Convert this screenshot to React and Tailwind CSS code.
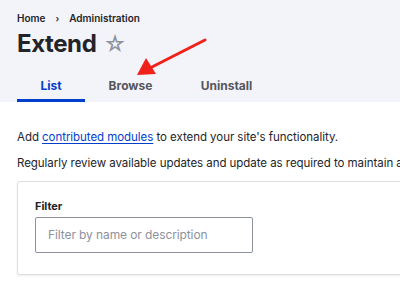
import React from "react";

const Arrow = () => (
  <svg className="absolute left-0 top-0 pointer-events-none" width="400" height="284">
    <line x1="205" y1="40" x2="150" y2="68" stroke="#f0201a" strokeWidth="3" strokeLinecap="round" />
    <polygon points="137,75 146,58 156,74" fill="#f0201a" />
  </svg>
);

const App = () => {
  const tabs = [
    { label: "List", active: true, w: "w-[68px]" },
    { label: "Browse", active: false, w: "w-[91px]" },
    { label: "Uninstall", active: false, w: "w-[101px]" },
  ];

  return (
    <div className="relative w-[400px] h-[284px] overflow-hidden bg-white text-[#232429]" style={{ fontFamily: "Inter, 'Noto Sans', sans-serif" }}>
      <div className="w-[640px]">
        {/* Header */}
        <div className="bg-[#f3f4f9] h-[102px] px-[17px] pt-[12px] flex flex-col">
          <div className="flex items-center text-[10px] font-semibold text-[#232429] leading-[13px]">
            <span>Home</span>
            <span className="mx-[10px] text-[9px]">›</span>
            <span>Administration</span>
          </div>
          <div className="flex items-center mt-[4px] h-[30px]">
            <h1 className="text-[24px] font-bold leading-[30px] tracking-[-0.4px]">Extend</h1>
            <span className="ml-[7px] text-[22px] text-[#8e929c] leading-none">☆</span>
          </div>
          <div className="flex mt-auto">
            {tabs.map((t) => (
              <div
                key={t.label}
                className={`${t.w} h-[31px] flex justify-center pt-[6px] text-[12px] font-bold ${
                  t.active ? "text-[#003ecc] border-b-[3px] border-[#003ecc]" : "text-[#55565b]"
                }`}
              >
                {t.label}
              </div>
            ))}
          </div>
        </div>

        {/* Content */}
        <div className="px-[17px] pt-[26px] text-[11.5px] tracking-[-0.05px] leading-[18px] whitespace-nowrap">
          <p>
            Add{" "}
            <a className="text-[#003ecc] underline underline-offset-2">contributed modules</a>{" "}
            to extend your site's functionality.
          </p>
          <p className="mt-[8px]">
            Regularly review available updates and update as required to maintain a secure and current site.
          </p>
          <div className="mt-[9px] border border-[#dedfe4] rounded-[2px] shadow-[0_1px_2px_rgba(0,0,0,0.08)] h-[94px] px-[17px] pt-[17px]">
            <label className="block text-[11px] font-bold leading-[14px] mb-[4px]">Filter</label>
            <div className="w-[218px] h-[36px] border border-[#8e929c] rounded-[2px] flex items-center px-[12px] text-[12px] tracking-[-0.1px] text-[#8e929c]">
              Filter by name or description
            </div>
          </div>
        </div>
      </div>
      <Arrow />
    </div>
  );
};

export default App;
